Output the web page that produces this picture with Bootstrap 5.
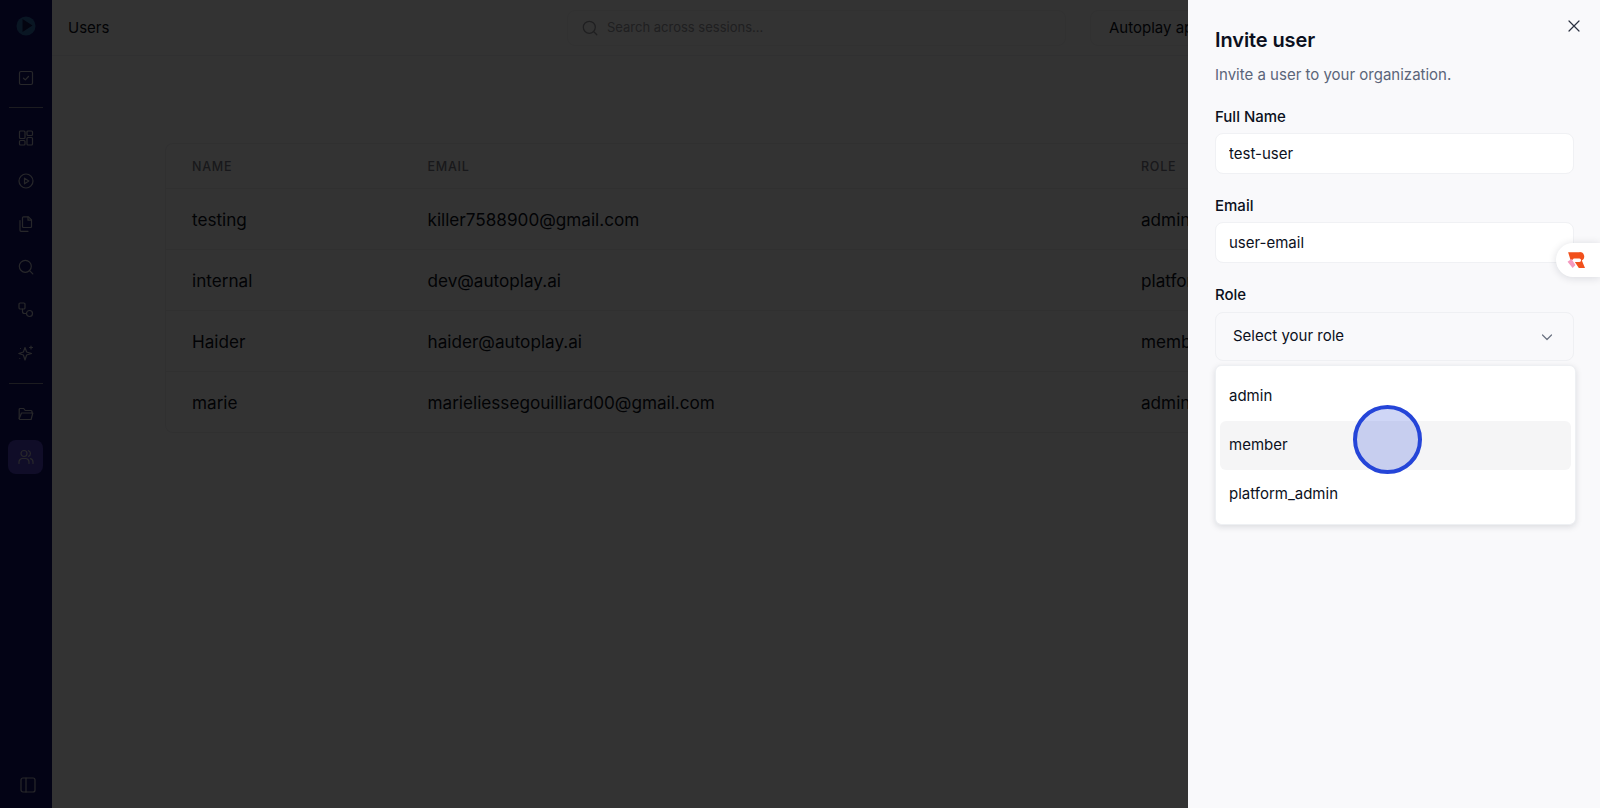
<!DOCTYPE html>
<html lang="en">
<head>
<meta charset="utf-8">
<title>Users</title>
<link href="https://cdn.jsdelivr.net/npm/bootstrap@5.3.0/dist/css/bootstrap.min.css" rel="stylesheet">
<style>
html,body{height:100%;overflow:hidden}
body{font-family:Inter,"Liberation Sans",sans-serif;background:#fff;color:#0b0f1a}
.app-shell{height:808px}
.rail{width:52px;background:#10106a;flex:none;padding:12px 1px 0 0}
.rail-item{width:35px;height:34px;border-radius:8px;color:#c4c4d0}
.rail-item svg{width:16px;height:16px;fill:none;stroke:currentColor;stroke-width:1.2;stroke-linecap:round;stroke-linejoin:round}
.rail-item.is-active{background:#5040c8}
.rail-logo{margin-bottom:21px}
.rail-gap{margin-bottom:9px}
.rail-rule{width:34px;height:1px;background:#8a8aa0;margin:12px 0 13px}
.rail-foot{margin-top:auto;margin-bottom:6px;margin-left:4px}
.top-strip{height:56px;border-bottom:1px solid #f0f0f3;padding:1px 16px 0 16px}
.page-name{font-size:15px;font-weight:400}
.search-box{width:499px;height:36px;border:1px solid #f2f2f4;border-radius:8px;padding-left:14px;gap:9px;color:#9a9aa2;font-size:13px;margin-right:24px}
.app-pick{width:494px;height:36px;border:1px solid #f2f2f4;border-radius:8px;padding-left:18px;font-size:15px;color:#0b0f1a;overflow:hidden;white-space:nowrap}
.users-wrap{padding:87px 0 0 113px;width:1136px}
.users-card{border:1px solid #eeeef1;border-right:0;border-radius:8px 0 0 8px;overflow:hidden}
.users-table{table-layout:fixed;margin:0;--bs-table-bg:transparent;--bs-table-border-color:#eeeef1}
.users-table th{font-size:12.5px;font-weight:500;letter-spacing:.06em;text-transform:uppercase;color:#7a7a85;height:44px;padding:3px 0 0 26px;vertical-align:middle}
.users-table td{font-size:17.15px;font-weight:400;height:61px;padding:2px 0 0 26px;vertical-align:middle;color:#0b0f1a;overflow:hidden;white-space:nowrap}
.users-table tr:last-child td{border-bottom:0}
.offcanvas-backdrop.show{opacity:.8}
.invite-panel.offcanvas{width:412px;background:#f9f9fb;border:0;padding:26px 26px 0 27px;transition:none;--bs-offcanvas-width:412px}
.panel-title{font-size:20px;font-weight:600;line-height:28px;margin:0;color:#0b1020;letter-spacing:-.005em}
.panel-sub{font-size:15px;line-height:24px;color:#5b6579;margin:9px 0 20px}
.field-label{font-size:15px;font-weight:500;line-height:20px;margin:0 0 6px;color:#0b1020;display:block}
.field-input.form-control{height:41px;border:1px solid #f0f1f4;border-radius:8px;font-size:15px;padding:0 13px;color:#0b1020;background:#fff;width:359px;margin-bottom:22px;box-shadow:none}
.role-pick{height:49px;width:359px;border:1px solid #eff0f3;border-radius:8px;padding:0 20px 0 17px;margin-top:1px;font-size:15px;color:#0b1020;background:#f9f9fb}
.role-menu.dropdown-menu{position:static;display:block;width:361px;margin:4px 0 0;padding:5.5px 4px;border:1px solid #eef0f3;border-radius:6px;box-shadow:0 2px 6px rgba(15,23,42,.13);--bs-dropdown-min-width:0}
.role-menu .dropdown-item{height:49px;display:flex;align-items:center;padding:0 9px;font-size:15px;color:#0b1020;border-radius:6px}
.role-menu .dropdown-item.is-hover{background:#f5f5f6}
.close-x{position:absolute;top:19px;right:19px;width:14px;height:14px;color:#2a3040;background:none;border:0;padding:0;display:flex}
.click-dot{position:absolute;left:165px;top:405px;width:69px;height:69px;border-radius:50%;border:4px solid #2545d8;background:rgba(37,69,216,.22);pointer-events:none;z-index:2000}
.rec-tab{position:absolute;right:0;top:243px;width:44px;height:34px;background:#fff;border-radius:17px 0 0 17px;box-shadow:0 1px 8px rgba(15,23,42,.14);z-index:2000}
</style>
</head>
<body>
<div class="app-shell d-flex">
  <nav class="rail d-flex flex-column align-items-center">
    <div class="rail-item rail-logo d-flex align-items-center justify-content-center" style="height:28px">
      <svg viewBox="0 0 20 20" style="width:20px;height:20px;stroke:none"><circle cx="10" cy="10" r="9.500" fill="#2f6fb0"/><path d="M6.500 3 16.500 9.500 6.500 16Z" fill="#0f1450"/></svg>
    </div>
    <div class="rail-item d-flex align-items-center justify-content-center"><svg viewBox="0 0 16 16"><rect x="1.500" y="1.500" width="13" height="13" rx="1.500"/><path d="m5.500 8.200 1.800 1.700 3.200-3.400"/></svg></div>
    <div class="rail-rule"></div>
    <div class="rail-item rail-gap d-flex align-items-center justify-content-center"><svg viewBox="0 0 16 16"><rect x="1.500" y="1" width="5.500" height="7.500" rx="1"/><rect x="9" y="1" width="5.500" height="4.500" rx="1"/><rect x="9" y="7.500" width="5.500" height="7.500" rx="1"/><rect x="1.500" y="10.500" width="5.500" height="4.500" rx="1"/></svg></div>
    <div class="rail-item rail-gap d-flex align-items-center justify-content-center"><svg viewBox="0 0 16 16"><circle cx="8" cy="8" r="7"/><path d="M6.500 5.200 10.800 8l-4.300 2.800Z"/></svg></div>
    <div class="rail-item rail-gap d-flex align-items-center justify-content-center"><svg viewBox="0 0 16 16"><path d="M5.500 .8h5l3 3v6.700a1 1 0 0 1-1 1h-7a1 1 0 0 1-1-1V1.800a1 1 0 0 1 1-1Z"/><path d="M10 1v3.200h3.200"/><path d="M2 4.500v9.800a1 1 0 0 0 1 1h7"/></svg></div>
    <div class="rail-item rail-gap d-flex align-items-center justify-content-center"><svg viewBox="0 0 16 16"><circle cx="7.300" cy="7.300" r="6"/><path d="m11.800 11.800 3 3"/></svg></div>
    <div class="rail-item rail-gap d-flex align-items-center justify-content-center"><svg viewBox="0 0 16 16"><rect x="1" y="1" width="6" height="6" rx="1.200"/><circle cx="11.500" cy="11.500" r="3"/><path d="M4.500 7v2.500a2 2 0 0 0 2 2h2"/></svg></div>
    <div class="rail-item d-flex align-items-center justify-content-center"><svg viewBox="0 0 16 16"><path d="M7 2.500 8.600 7 13.500 8.500 8.600 10 7 15 5.400 10 .8 8.500 5.400 7Z"/><path d="M13 1v3M11.500 2.500h3M1.800 13.500h.01M2.500 3.500h.01"/></svg></div>
    <div class="rail-rule" style="margin-top:13px"></div>
    <div class="rail-item rail-gap d-flex align-items-center justify-content-center"><svg viewBox="0 0 16 16"><path d="M1.200 12.500v-9a1 1 0 0 1 1-1h3.500l1.500 2h5.800a1 1 0 0 1 1 1v1.500"/><path d="M1.200 12.500 3.500 7h11.300l-1.700 6.500H2.200a1 1 0 0 1-1-1Z"/></svg></div>
    <div class="rail-item is-active d-flex align-items-center justify-content-center"><svg viewBox="0 0 16 16"><circle cx="6" cy="4.500" r="3"/><path d="M1 14.500v-1.500a3.500 3.500 0 0 1 3.500-3.500h3a3.500 3.500 0 0 1 3.500 3.500v1.500"/><path d="M10.500 1.700a3 3 0 0 1 0 5.600M12.500 9.700a3.500 3.500 0 0 1 2.500 3.300v1.500"/></svg></div>
    <div class="rail-item rail-foot d-flex align-items-center justify-content-center"><svg viewBox="0 0 16 16"><rect x="1" y="1" width="14" height="14" rx="2"/><path d="M6 1v14"/></svg></div>
  </nav>
  <main class="flex-grow-1">
    <header class="top-strip d-flex align-items-center">
      <span class="page-name me-auto">Users</span>
      <div class="search-box d-flex align-items-center">
        <svg width="16" height="16" viewBox="0 0 16 16" fill="none" stroke="currentColor" stroke-width="1.300" stroke-linecap="round"><circle cx="7.300" cy="7.300" r="6"/><path d="m11.800 11.800 3 3"/></svg>
        <span>Search across sessions...</span>
      </div>
      <div class="app-pick d-flex align-items-center">Autoplay app</div>
    </header>
    <div class="users-wrap">
      <div class="users-card">
        <table class="table users-table">
          <colgroup><col style="width:235.500px"><col style="width:713.500px"><col></colgroup>
          <thead><tr><th>Name</th><th>Email</th><th>Role</th></tr></thead>
          <tbody>
            <tr><td>testing</td><td>killer7588900@gmail.com</td><td>admin</td></tr>
            <tr><td>internal</td><td>dev@autoplay.ai</td><td>platform_admin</td></tr>
            <tr><td>Haider</td><td>haider@autoplay.ai</td><td>member</td></tr>
            <tr><td>marie</td><td>marieliessegouilliard00@gmail.com</td><td>admin</td></tr>
          </tbody>
        </table>
      </div>
    </div>
  </main>
</div>
<div class="offcanvas-backdrop show"></div>
<aside class="offcanvas offcanvas-end show invite-panel">
  <button class="close-x" type="button" aria-label="Close"><svg width="14" height="14" viewBox="0 0 14 14" fill="none" stroke="currentColor" stroke-width="1.200" stroke-linecap="round"><path d="M2 2l10 10M12 2 2 12"/></svg></button>
  <h2 class="panel-title">Invite user</h2>
  <p class="panel-sub">Invite a user to your organization.</p>
  <label class="field-label">Full Name</label>
  <input class="form-control field-input" value="test-user">
  <label class="field-label">Email</label>
  <input class="form-control field-input" value="user-email">
  <label class="field-label">Role</label>
  <div class="role-pick d-flex align-items-center justify-content-between">
    <span>Select your role</span>
    <svg width="12" height="12" viewBox="0 0 12 12" fill="none" stroke="#6b7280" stroke-width="1.200" stroke-linecap="round" stroke-linejoin="round"><path d="M1.500 4 6 8.500 10.500 4"/></svg>
  </div>
  <ul class="dropdown-menu role-menu list-unstyled">
    <li><a class="dropdown-item" href="#">admin</a></li>
    <li><a class="dropdown-item is-hover" href="#">member</a></li>
    <li><a class="dropdown-item" href="#">platform_admin</a></li>
  </ul>
  <div class="click-dot"></div>
</aside>
<div class="rec-tab d-flex align-items-center justify-content-center">
  <svg width="18" height="18" viewBox="0 0 16 16" class="me-1"><path d="M1 1h10a4 4 0 0 1 2.200 7.500L16 15h-5.500L7 9.700h4a1.200 1.200 0 0 0 0-3H6L3.500 9Z" fill="#f1501c"/><path d="M.5 9.500 4 7l3.500 5.500L5 15Z" fill="#f49ac0"/></svg>
</div>
</body>
</html>
